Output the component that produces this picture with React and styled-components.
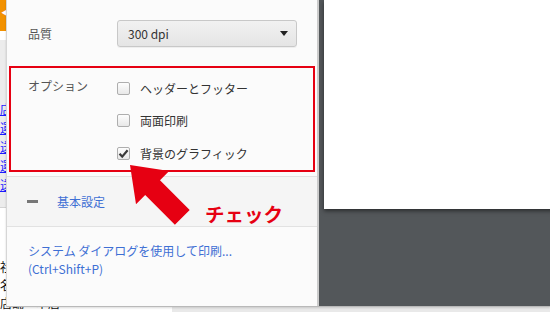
import React from "react";
import styled, { createGlobalStyle } from "styled-components";

const Global = createGlobalStyle`
  html, body { margin: 0; padding: 0; }
  body {
    width: 550px; height: 312px; overflow: hidden;
    font-family: "Noto Sans CJK JP", "Noto Sans", sans-serif;
  }
`;

const Screen = styled.div`
  position: relative;
  width: 550px;
  height: 312px;
  overflow: hidden;
  background: #fff;
`;

/* ---------- underlying web page ---------- */
const Page = styled.div`
  display: flex;
  flex-direction: column;
  height: 100%;
`;
const PageHeader = styled.div`
  height: 36px;
  background: #f29100;
  display: flex;
  align-items: flex-start;
  padding: 6px 0 0 1px;
  box-sizing: border-box;
  color: #fff;
  font-size: 9px;
`;
const PageBody = styled.div`
  flex: 1;
  display: flex;
`;
const PageLeft = styled.div`
  width: 172px;
  display: flex;
  flex-direction: column;
  padding-top: 9px;
  background: #fff;
`;
const NavBox = styled.div`
  height: 168px;
  background: #ececec;
  border-bottom: 1px solid #d4d4d4;
  display: flex;
  flex-direction: column;
  gap: 1px;
  padding-top: 60px;
  box-sizing: border-box;
`;
const NavLink = styled.a`
  color: #1a1aff;
  text-decoration: underline;
  font-size: 12px;
  line-height: 18px;
  white-space: nowrap;
`;
const PageText = styled.div`
  padding-top: ${p => p.$top || 0}px;
  color: #111;
  font-size: 12px;
  line-height: 18px;
  white-space: nowrap;
`;
const PageRight = styled.div`
  flex: 1;
  background: #e9e9e9;
`;

/* ---------- print dialog ---------- */
const Dialog = styled.div`
  position: absolute;
  left: 6px;
  top: 0;
  right: 0;
  height: 306px;
  display: flex;
  border-left: 1px solid #d6d6d6;
  border-bottom: 1px solid #b9b9b9;
  box-shadow: 0 1px 2px rgba(0,0,0,0.15);
`;
const Settings = styled.div`
  width: 310px;
  flex-shrink: 0;
  background: #fbfbfb;
  border-right: 2px solid #cbcbcb;
  display: flex;
  flex-direction: column;
  font-size: 12px;
`;
const Row = styled.div`
  display: flex;
  align-items: ${p => p.$align || "center"};
  padding-left: 21px;
`;
const Label = styled.div`
  width: 89px;
  flex-shrink: 0;
  color: #555;
  line-height: 18px;
  padding-top: ${p => p.$pt || 0}px;
`;
const Select = styled.div`
  margin-top: 20px;
  width: 180px;
  height: 27px;
  box-sizing: border-box;
  border: 1px solid #c8c8c8;
  border-radius: 3px;
  background: linear-gradient(#f1f1f1, #e5e5e5);
  box-shadow: 0 1px 0 rgba(0,0,0,0.05);
  display: flex;
  align-items: center;
  justify-content: space-between;
  padding: 0 8px 0 10px;
  color: #333;
  font-size: 12px;
`;
const Caret = styled.span`
  width: 0; height: 0;
  border-left: 4px solid transparent;
  border-right: 4px solid transparent;
  border-top: 5px solid #222;
`;
const Options = styled.div`
  display: flex;
  flex-direction: column;
  padding-top: 24.75px;
  padding-bottom: 6.75px;
`;
const OptionList = styled.div`
  display: flex;
  flex-direction: column;
`;
const Option = styled.label`
  height: 32.5px;
  display: flex;
  align-items: center;
  gap: 10px;
  color: #333;
`;
const Box = styled.span`
  width: 13px;
  height: 13px;
  box-sizing: border-box;
  border: 1px solid #aeaeae;
  border-radius: 2px;
  background: linear-gradient(#fdfdfd, #e8e8e8);
  display: flex;
  align-items: center;
  justify-content: center;
`;
const BasicSection = styled.div`
  height: 51px;
  box-sizing: border-box;
  border-top: 1px solid #e2e2e2;
  border-bottom: 1px solid #e2e2e2;
  background: #f5f5f5;
  display: flex;
  align-items: center;
  padding-left: 20px;
  gap: 19px;
`;
const Dash = styled.span`
  width: 11px;
  height: 3px;
  background: #777;
`;
const Link = styled.span`
  color: #3e6fd4;
  line-height: 18px;
`;
const SystemSection = styled.div`
  display: flex;
  flex-direction: column;
  padding: 15px 0 0 21px;
`;
const Preview = styled.div`
  flex: 1;
  background: #53575a;
  overflow: hidden;
  padding-left: 5px;
`;
const Paper = styled.div`
  width: 300px;
  height: 209px;
  background: #fff;
  box-shadow: 0 2px 4px rgba(0,0,0,0.5);
`;

/* ---------- annotation overlays ---------- */
const RedFrame = styled.div`
  position: absolute;
  left: 9px;
  top: 66px;
  width: 306px;
  height: 106px;
  box-sizing: border-box;
  border: 2px solid #e60012;
`;
const ArrowSvg = styled.svg`
  position: absolute;
  left: 120px;
  top: 160px;
`;
const Note = styled.div`
  position: absolute;
  left: 205px;
  top: 200px;
  color: #e60012;
  font-size: 19.5px;
  font-weight: 700;
  line-height: 28px;
`;

function Check() {
  return (
    <svg width="11" height="11" viewBox="0 0 11 11">
      <path d="M1.5 5.8 L4.2 8.6 L9.6 2.2" fill="none" stroke="#3a3a3a" strokeWidth="2.2" strokeLinejoin="miter" />
    </svg>
  );
}

export default function App() {
  const opts = [
    { t: "ヘッダーとフッター", c: false },
    { t: "両面印刷", c: false },
    { t: "背景のグラフィック", c: true },
  ];
  // arrow points in page coords, shifted by (120,160)
  const pts = [
    [130, 165], [169.2, 171.0], [160.0, 180.2], [189.7, 209.9],
    [174.9, 224.7], [145.2, 195.0], [136.0, 204.2],
  ].map(([x, y]) => `${x - 120},${y - 160}`).join(" ");
  return (
    <Screen>
      <Global />
      <Page>
        <PageHeader>◀</PageHeader>
        <PageBody>
          <PageLeft>
            <NavBox>
              <NavLink>店</NavLink>
              <NavLink>運</NavLink>
              <NavLink>送</NavLink>
              <NavLink>運</NavLink>
              <NavLink>送</NavLink>
            </NavBox>
            <PageText $top={50}>社</PageText>
            <PageText>名</PageText>
            <PageText>店舗：本店</PageText>
          </PageLeft>
          <PageRight />
        </PageBody>
      </Page>

      <Dialog>
        <Settings>
          <Row>
            <Label $pt={20}>品質</Label>
            <Select>
              <span>300 dpi</span>
              <Caret />
            </Select>
          </Row>
          <Options>
            <Row $align="flex-start">
              <Label $pt={5}>オプション</Label>
              <OptionList>
                {opts.map(o => (
                  <Option key={o.t}>
                    <Box>{o.c && <Check />}</Box>
                    <span>{o.t}</span>
                  </Option>
                ))}
              </OptionList>
            </Row>
          </Options>
          <BasicSection>
            <Dash />
            <Link>基本設定</Link>
          </BasicSection>
          <SystemSection>
            <Link>システム ダイアログを使用して印刷...</Link>
            <Link>(Ctrl+Shift+P)</Link>
          </SystemSection>
        </Settings>
        <Preview>
          <Paper />
        </Preview>
      </Dialog>

      <RedFrame />
      <ArrowSvg width="80" height="70" viewBox="0 0 80 70">
        <polygon points={pts} fill="#e60012" />
      </ArrowSvg>
      <Note>チェック</Note>
    </Screen>
  );
}
